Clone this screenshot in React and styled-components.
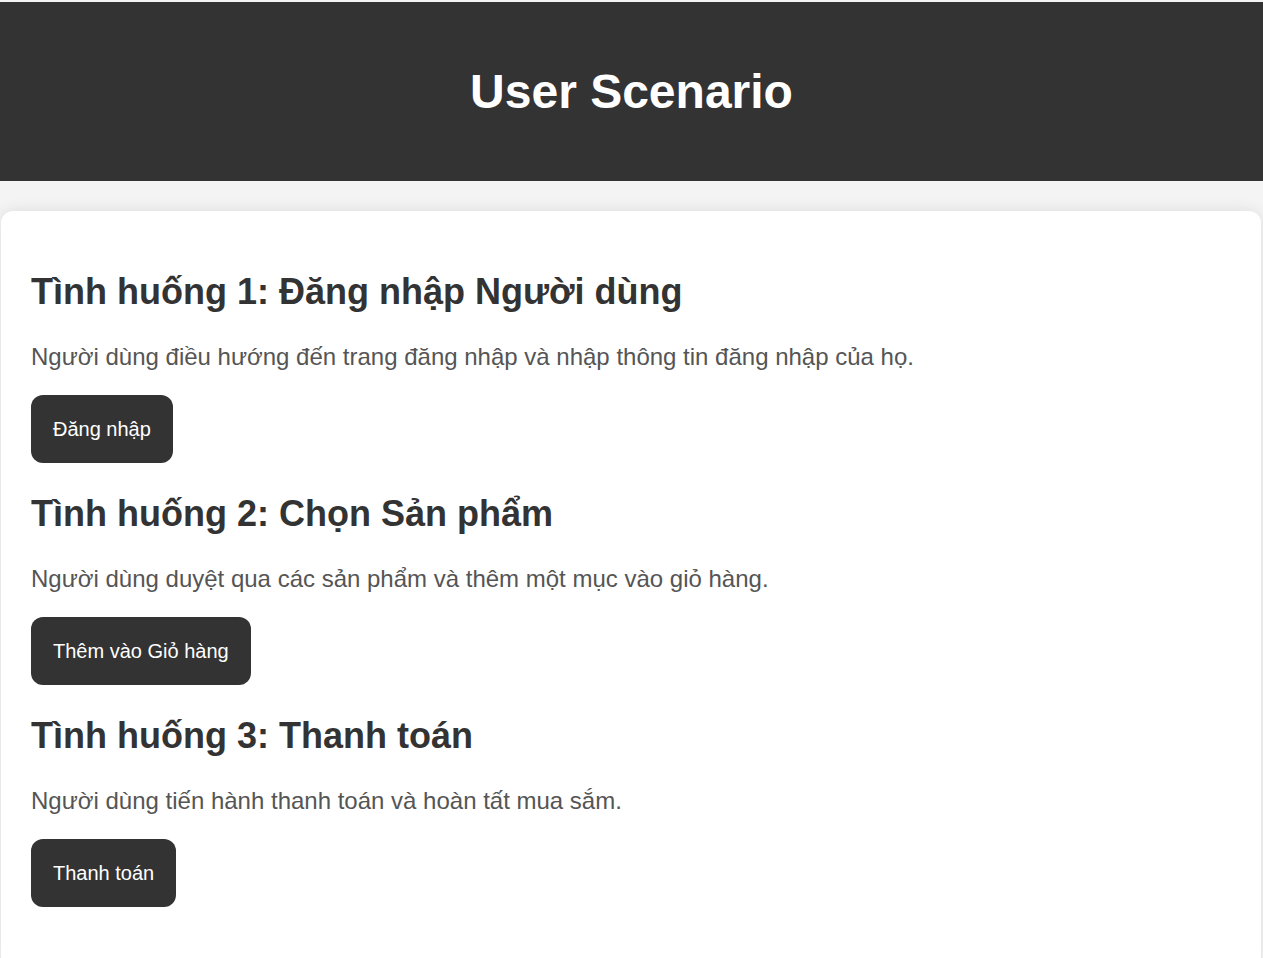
import React from "react";
import styled, { createGlobalStyle } from "styled-components";

const Global = createGlobalStyle`
  html, body { margin: 0; padding: 0; }
  body {
    background: #f4f4f4;
    font-family: "Liberation Sans", Arial, sans-serif;
    padding-top: 2px;
  }
`;

const Header = styled.header`
  background: #333333;
  color: #ffffff;
  padding: 30px;
  text-align: center;
`;

const Title = styled.h1`
  margin: 32px 0;
  font-size: 48px;
  font-weight: bold;
  line-height: 55px;
`;

const Card = styled.main`
  width: 1260px;
  margin: 30px 0 0 1px;
  box-sizing: border-box;
  background: #ffffff;
  border-radius: 12px;
  padding: 30px;
  box-shadow: 0 0 15px rgba(0, 0, 0, 0.1);
`;

const Section = styled.section`
  margin-bottom: 30px;
`;

const Heading = styled.h2`
  margin: 30px 0;
  font-size: 36px;
  line-height: 41px;
  font-weight: bold;
  color: #333333;
`;

const Text = styled.p`
  margin: 0 0 24px;
  font-size: 24px;
  line-height: 29px;
  color: #555555;
`;

const Button = styled.button`
  display: inline-block;
  background: #333333;
  color: #ffffff;
  border: none;
  border-radius: 12px;
  padding: 22px;
  font-family: "Liberation Sans", Arial, sans-serif;
  font-size: 20px;
  line-height: 24px;
  cursor: pointer;
`;

const scenarios = [
  {
    title: "Tình huống 1: Đăng nhập Người dùng",
    text: "Người dùng điều hướng đến trang đăng nhập và nhập thông tin đăng nhập của họ.",
    action: "Đăng nhập",
  },
  {
    title: "Tình huống 2: Chọn Sản phẩm",
    text: "Người dùng duyệt qua các sản phẩm và thêm một mục vào giỏ hàng.",
    action: "Thêm vào Giỏ hàng",
  },
  {
    title: "Tình huống 3: Thanh toán",
    text: "Người dùng tiến hành thanh toán và hoàn tất mua sắm.",
    action: "Thanh toán",
  },
];

export default function App() {
  return (
    <>
      <Global />
      <Header>
        <Title>User Scenario</Title>
      </Header>
      <Card>
        {scenarios.map((s) => (
          <Section key={s.title}>
            <Heading>{s.title}</Heading>
            <Text>{s.text}</Text>
            <Button>{s.action}</Button>
          </Section>
        ))}
      </Card>
    </>
  );
}
